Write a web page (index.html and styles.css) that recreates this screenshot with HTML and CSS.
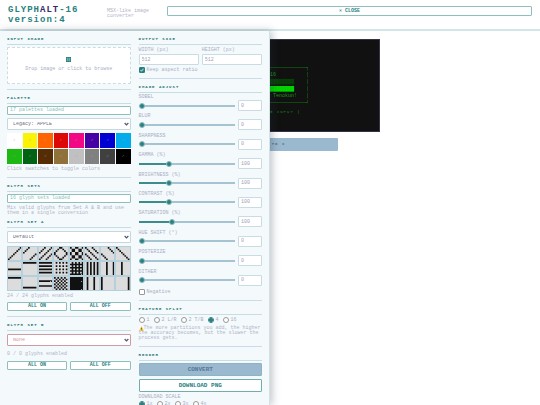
FILE: index.html
```html
<!DOCTYPE html>
<html lang="en">
<head>
<meta charset="utf-8">
<title>GLYPHALT-16</title>
<link rel="stylesheet" href="styles.css">
</head>
<body>
<header class="topbar">
  <h1 class="brand">GLYPH<span class="brand-dark">ALT</span>-16<br>version:4</h1>
  <p class="tagline">MSX-like image<br>converter</p>
  <button class="btn close" type="button">✕ CLOSE</button>
</header>
<div class="stage">
  <main class="preview">
    <div class="screen">
<pre class="ascii">┌────────────────────────┐
│   GLYPHALT-16          │
│  <span class="dim">▓▓▓▓▓▓▓▓▓▓▓▓▓▓▓▓▓▓</span>    │
│  <span class="lit">██████████████████</span>    │
│    Hi, I am Tenokun!   │
└────────────────────────┘</pre>
      <p class="await">[ AWAITING INPUT ]</p>
    </div>
    <button class="share" type="button">POST TO X</button>
  </main>
  <aside class="drawer">
    <div class="col">
      <section class="group">
        <h2>INPUT IMAGE</h2>
        <button class="drop" type="button">
          <svg class="drop-icon" viewBox="0 0 10 10"><path fill="#2a7f7f" d="M0 0h10v10H0z"/><path stroke="#b9d6d8" d="M1 3h8M1 5h8M1 7h8M3 1v8M7 1v8" stroke-width=".6"/></svg>
          <span>Drop image or click to browse</span>
        </button>
      </section>
      <section class="group">
        <h2>PALETTE</h2>
        <p class="status">17 palettes loaded</p>
        <select class="select" aria-label="Palette"><option>Legacy: APPLE</option></select>
        <div class="grid swatches" id="swatches"></div>
        <p class="hint">Click swatches to toggle colors</p>
      </section>
      <section class="group">
        <h2>GLYPH SETS</h2>
        <p class="status">16 glyph sets loaded</p>
        <p class="hint">Mix valid glyphs from Set A &amp; B and use them in a single conversion</p>
        <h2 class="sub">GLYPH SET A</h2>
        <select class="select" aria-label="Glyph set A"><option>Default</option></select>
        <div class="grid" id="glyphs"></div>
        <p class="hint count">24 / 24 glyphs enabled</p>
        <div class="pair"><button class="btn" type="button">ALL ON</button><button class="btn" type="button">ALL OFF</button></div>
      </section>
      <section class="group">
        <h2>GLYPH SET B</h2>
        <select class="select none" aria-label="Glyph set B"><option>None</option></select>
        <p class="hint count">0 / 0 glyphs enabled</p>
        <div class="pair"><button class="btn" type="button">ALL ON</button><button class="btn" type="button">ALL OFF</button></div>
      </section>
    </div>
    <div class="col">
      <section class="group">
        <h2>OUTPUT SIZE</h2>
        <div class="pair">
          <label class="field">WIDTH (px)<input class="num" type="text" value="512"></label>
          <label class="field">HEIGHT (px)<input class="num" type="text" value="512"></label>
        </div>
        <label class="check aspect"><input type="checkbox" checked>Keep aspect ratio</label>
      </section>
      <section class="group">
        <h2>IMAGE ADJUST</h2>
        <div class="sliders" id="sliders"></div>
        <label class="check"><input type="checkbox">Negative</label>
      </section>
      <section class="group">
        <h2>FEATURE SPLIT</h2>
        <div class="radios">
          <label class="check"><input type="radio" name="split">1</label>
          <label class="check"><input type="radio" name="split">2 L/R</label>
          <label class="check"><input type="radio" name="split">2 T/B</label>
          <label class="check"><input type="radio" name="split" checked>4</label>
          <label class="check"><input type="radio" name="split">16</label>
        </div>
        <p class="hint"><svg class="warn" viewBox="0 0 10 10"><path fill="#fbc02d" d="M5 .5 9.8 9.5H.2z"/><path stroke="#333" stroke-width="1.2" d="M5 3.5v3M5 7.4v1.2"/></svg>The more partitions you add, the higher the accuracy becomes, but the slower the process gets.</p>
      </section>
      <section class="group">
        <h2>RENDER</h2>
        <button class="big convert" type="button">CONVERT</button>
        <button class="big" type="button">DOWNLOAD PNG</button>
        <div class="scale-label">DOWNLOAD SCALE</div>
        <div class="radios">
          <label class="check"><input type="radio" name="scale" checked>1x</label>
          <label class="check"><input type="radio" name="scale">2x</label>
          <label class="check"><input type="radio" name="scale">3x</label>
          <label class="check"><input type="radio" name="scale">4x</label>
        </div>
      </section>
    </div>
  </aside>
</div>
<script src="app.js"></script>
</body>
</html>
```
FILE: styles.css
```css
* { box-sizing: border-box; }
body {
  margin: 0;
  height: 100vh;
  overflow: hidden;
  display: flex;
  flex-direction: column;
  background: #fff;
  color: #a9aec6;
  font: 5px/5px "Liberation Mono", monospace;
}
h1, h2, p, pre { margin: 0; }
button, input, select { font: inherit; color: inherit; margin: 0; }

.topbar {
  display: flex;
  align-items: flex-start;
  height: 31px;
  padding: 5px 8px 0;
  border-bottom: 2px solid #d3e5e8;
}
.brand {
  width: 99px;
  font-size: 9px;
  line-height: 10px;
  letter-spacing: 1px;
  color: #2a7f7f;
}
.brand-dark { color: #3a2a66; }
.tagline { width: 60px; padding-top: 4px; color: #b3b3c6; }
.btn {
  flex: 1;
  height: 9px;
  padding: 0;
  background: #fff;
  border: 1px solid #8fbfbd;
  border-radius: 1px;
  color: #2a7f7f;
  font-weight: bold;
  line-height: 5px;
}
.close { height: 10px; margin-top: 1px; }

.stage { position: relative; flex: 1; min-height: 0; }
.preview {
  display: flex;
  flex-direction: column;
  align-items: center;
  gap: 6px;
  padding-top: 8px;
}
.screen {
  width: 220px;
  height: 93px;
  padding-top: 25px;
  background: #111;
  border: 1px solid #33334a;
  color: #12a012;
  text-align: center;
}
.ascii { font: 5px/7px "Liberation Mono", monospace; }
.dim { color: #064d06; }
.lit { color: #00d800; }
.await { padding-top: 3px; font-size: 4px; line-height: 5px; letter-spacing: 1px; color: #0c8f0c; }
.share {
  width: 136px;
  height: 13px;
  padding: 0;
  border: 0;
  border-radius: 1px;
  background: #9ab9ce;
  color: #4f6f89;
  font-size: 4px;
  font-weight: bold;
  letter-spacing: 1px;
}

.drawer {
  position: absolute;
  top: 0;
  bottom: 0;
  left: 0;
  width: 50%;
  overflow: hidden;
  display: flex;
  gap: 8px;
  padding: 6px 7px 0;
  background: #f4f9fb;
  border-right: 1px solid #d3e2ea;
  box-shadow: 2px 0 8px rgba(40, 50, 70, .3);
}
.col { flex: 1; min-width: 0; }
.group { padding-bottom: 5px; margin-bottom: 6px; border-bottom: 1px solid #cddbe8; }
.group:last-child { border-bottom: 0; }
h2 {
  margin-bottom: 2px;
  padding-bottom: 2px;
  border-bottom: 1px solid #c8dce4;
  color: #1f7575;
  font-size: 4px;
  line-height: 5px;
  letter-spacing: 1px;
}
.sub { margin-top: 4px; }

.drop {
  width: 100%;
  height: 37px;
  padding: 0 0 2px;
  display: flex;
  flex-direction: column;
  align-items: center;
  justify-content: center;
  gap: 5px;
  background: #fff;
  border: 1px dashed #cbdce2;
  border-radius: 1px;
}
.drop-icon { width: 5px; height: 5px; }
.status {
  height: 9px;
  padding: 1px 2px;
  background: #fff;
  border: 1px solid #8fbfbd;
  border-radius: 1px;
  color: #8dbfbb;
}
.select {
  appearance: none;
  display: block;
  width: 100%;
  height: 12px;
  margin: 3px 0;
  padding: 0 5px;
  border: 1px solid #c5d8e0;
  border-radius: 1px;
  background: #fff url("data:image/svg+xml,%3Csvg xmlns='http://www.w3.org/2000/svg' viewBox='0 0 8 6'%3E%3Cpath d='M1 1.5 4 4.5 7 1.5' fill='none' stroke='%23505a70' stroke-width='2'/%3E%3C/svg%3E") right 1px center / 5px 4px no-repeat;
  color: #6b6b85;
}
.select.none { border-color: #d09aa5; color: #d88f9b; }
.grid { display: grid; grid-template-columns: repeat(8, 1fr); }
.swatches { gap: 1px; }
.swatch {
  height: 15px;
  padding: 0;
  border: 0;
  color: #a3a3a3;
  font-size: 4px;
}
.glyph {
  display: block;
  width: 100%;
  height: 15px;
  padding: 0;
  border: 1px solid #b6cfdc;
  background: #dcdcdc;
}
.glyph svg { display: block; width: 100%; height: 100%; }
.hint { padding-top: 3px; color: #b0b5ca; }
.count { padding: 3px 0; }
.select + .count { padding-bottom: 4px; }
.pair { display: flex; gap: 3px; }

.field { flex: 1; min-width: 0; padding-top: 1px; }
.num {
  display: block;
  width: 100%;
  height: 11px;
  padding: 0 2px;
  border: 1px solid #c9dbe3;
  border-radius: 1px;
  background: #fff;
  color: #9ea1ba;
}
.field .num { margin-top: 1px; }
.check { display: flex; align-items: center; gap: 2px; height: 6px; }
.aspect { margin-top: 2px; }
.check input {
  appearance: none;
  width: 6px;
  height: 6px;
  border: 1px solid #999;
  border-radius: 1px;
  background: #fff;
}
.check input[type="checkbox"]:checked {
  border-color: #2a7f7f;
  background: #2a7f7f url("data:image/svg+xml,%3Csvg xmlns='http://www.w3.org/2000/svg' viewBox='0 0 8 8'%3E%3Cpath d='M1 4 3 6.5 7 1.5' fill='none' stroke='white' stroke-width='1.6'/%3E%3C/svg%3E") center / 100% no-repeat;
}
.check input[type="radio"] { border-radius: 50%; }
.check input[type="radio"]:checked {
  border-color: #2a7f7f;
  background: radial-gradient(#2a7f7f 55%, #fff 75%);
}
.sliders { display: grid; grid-auto-rows: 1fr; height: 194px; }
.slider {
  display: grid;
  grid-template-columns: 1fr 24px;
  column-gap: 3px;
  align-content: start;
  align-items: center;
}
.slider label { grid-column: 1 / 3; line-height: 5px; }
.range {
  appearance: none;
  width: 100%;
  height: 6px;
  background: linear-gradient(90deg, #3c8c8c var(--fill), #a5c3d0 var(--fill)) center / 100% 2px no-repeat;
}
.range::-webkit-slider-thumb {
  appearance: none;
  width: 6px;
  height: 6px;
  border: 1px solid #8ebbc0;
  border-radius: 50%;
  background: #2a7f7f;
}
.radios { display: flex; gap: 4px; }
.warn { display: inline-block; width: 5px; height: 5px; vertical-align: top; }
.big {
  display: block;
  width: 100%;
  height: 13px;
  margin-bottom: 3px;
  padding: 0;
  background: #fff;
  border: 1px solid #6faeae;
  border-radius: 1px;
  color: #2a7f7f;
  font-size: 6px;
  font-weight: bold;
}
.convert { background: #9ab9ce; border-color: #8fb2c6; color: #56789a; }
.scale-label { padding-bottom: 1px; }
```
FILE: app.js
```js
const colors = ["#ffffff", "#fbf305", "#ff6403", "#dd0907", "#f20884", "#4700a5", "#0000d3", "#02abea",
  "#1fb714", "#006412", "#562c05", "#90713a", "#c0c0c0", "#808080", "#404040", "#000000"];
document.getElementById("swatches").innerHTML = colors.map(c =>
  `<button class="swatch" type="button" style="background:${c}">✓</button>`).join("");

// Each glyph is an 8x8 bitmap given as a test on column x and row y.
const glyphs = [
  (x, y) => x + y === 7,
  (x, y) => x + y === 3 || x + y === 11,
  (x, y) => (x + y) % 4 === 3,
  (x, y) => x + y === 3 || x + y === 11 || Math.abs(x - y) === 4,
  (x, y) => (x + y) % 4 === 3 || (x - y) % 4 === 0,
  (x, y) => (x - y) % 4 === 0,
  (x, y) => Math.abs(x - y) === 4,
  (x, y) => x === y,
  (x, y) => y === 4,
  (x, y) => y === 0,
  (x, y) => y % 2 === 0,
  (x, y) => x % 2 === 1 && y % 2 === 0,
  (x, y) => x % 2 === 1 || y % 2 === 1,
  (x, y) => x % 2 === 1,
  (x, y) => x === 3 || x === 7,
  (x, y) => x === 3,
  (x, y) => y === 0,
  (x, y) => y === 6,
  (x, y) => y === 2 || y === 5,
  (x, y) => (x + y) % 2 === 0,
  () => true,
  (x, y) => x === 1 || x === 5,
  (x, y) => x === 0,
  (x, y) => x === 7
];
document.getElementById("glyphs").innerHTML = glyphs.map(on => {
  let d = "";
  for (let y = 0; y < 8; y++) for (let x = 0; x < 8; x++) if (on(x, y)) d += `M${x} ${y}h1v1h-1z`;
  return `<button class="glyph" type="button"><svg viewBox="0 0 8 8" preserveAspectRatio="none"><path fill="#111" d="${d}"/></svg></button>`;
}).join("");

const sliders = [["SOBEL", 0, 100], ["BLUR", 0, 100], ["SHARPNESS", 0, 100], ["GAMMA (%)", 100, 325],
  ["BRIGHTNESS (%)", 100, 325], ["CONTRAST (%)", 100, 325], ["SATURATION (%)", 100, 300],
  ["HUE SHIFT (°)", 0, 360], ["POSTERIZE", 0, 100], ["DITHER", 0, 100]];
document.getElementById("sliders").innerHTML = sliders.map(([name, value, max], i) =>
  `<div class="slider"><label for="s${i}">${name}</label>
  <input class="range" id="s${i}" type="range" min="0" max="${max}" value="${value}" style="--fill:${value / max * 100}%">
  <input class="num" type="text" value="${value}" aria-label="${name}"></div>`).join("");
```
